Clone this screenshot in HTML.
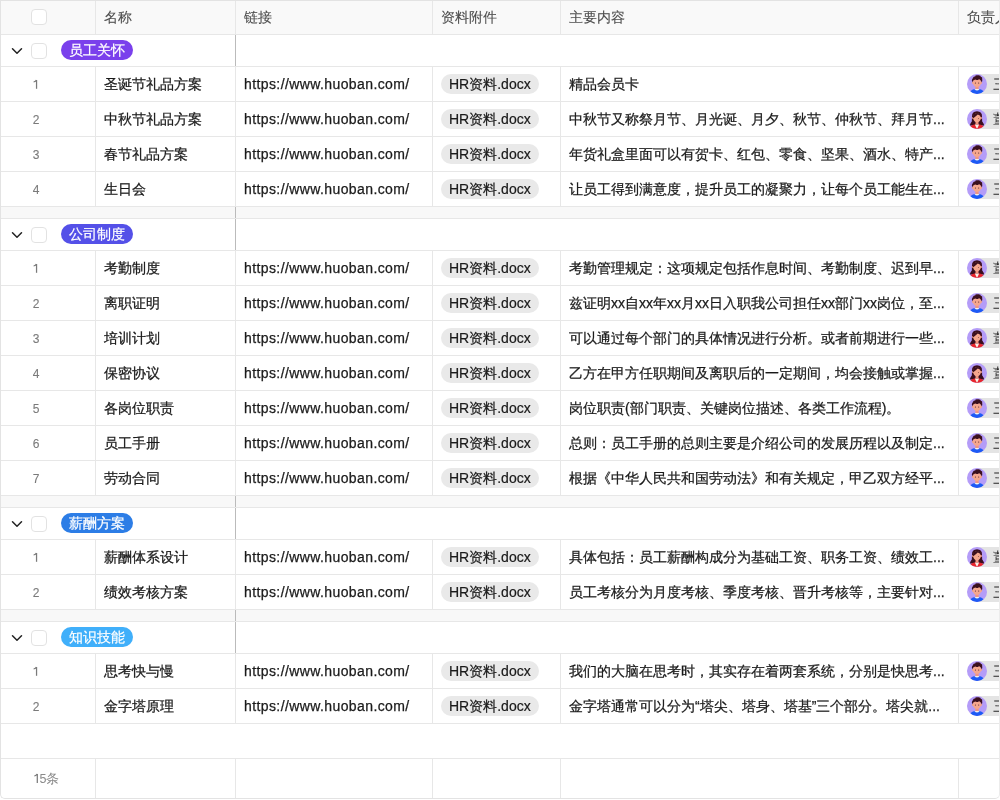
<!DOCTYPE html>
<html><head><meta charset="utf-8"><style>
*{margin:0;padding:0;box-sizing:border-box}
html,body{-webkit-font-smoothing:antialiased;width:1000px;height:800px;overflow:hidden;background:#fff;font-family:"Liberation Sans",sans-serif}
.tbl{position:absolute;left:0;top:0;width:1000px;height:800px;overflow:hidden;will-change:transform}
.edge{position:absolute;left:999px;top:1px;width:1px;height:792px;background:#f4f4f4;z-index:4}
.frame{position:absolute;left:0;top:0;width:1000px;height:799px;border:1px solid #e3e3e3;border-right-color:#ececec;border-radius:0 0 5px 5px;pointer-events:none;z-index:5}
.tbl>div{position:absolute}
.hdr{left:0;width:1000px;background:#f9f9f9}
.hl{left:0;width:1000px;height:1px;background:#e7e7e7}
.vl{width:1px;background:#e7e7e7}
.vld{width:1px;background:#bbbbbb}
.sp{left:0;width:1000px;background:#f8f8f8}
.cb{width:16px;height:16px;border:1px solid #e2e2e2;border-radius:4px;background:#fff}
.ht{height:34px;line-height:35px;font-size:14px;color:#4d4d4d;-webkit-text-stroke:0.1px #4d4d4d;white-space:nowrap}
.tx{height:34px;line-height:34px;font-size:14px;color:#1a1a1a;-webkit-text-stroke:0.25px #1a1a1a;white-space:nowrap}
.url{letter-spacing:0.4px}
.one{width:8px;height:10px}
.one svg{display:block}
.num{left:0;width:72px;text-align:center;height:34px;line-height:35px;font-size:12px;color:#7a7a7a;-webkit-text-stroke:0.1px #7a7a7a}
.chev{left:11px;width:12px;height:12px}
.chev svg{display:block}
.tag{left:61px;height:20px;line-height:20px;padding:0 8px;border-radius:10px;color:#fff;font-size:14px;-webkit-text-stroke:0.2px #fff;white-space:nowrap}
.pill{height:20px;line-height:20px;padding:0 8px;border-radius:10px;background:#e9e9e9;color:#1a1a1a;-webkit-text-stroke:0.2px #1a1a1a;font-size:14px;white-space:nowrap}
.upill{left:977px;width:40px;height:20px;background:#e4e4e4}
.tn{position:absolute;left:16px;top:0;line-height:20px;font-size:14px;color:#262626}
.av{left:967px;width:20px;height:20px}
.av svg{display:block}
.foot{left:0;width:92px;text-align:center;height:39px;line-height:40px;font-size:12.5px;color:#8a8a8a}
</style></head><body>
<div class="tbl"><div class="hdr" style="top:0;height:34px"></div><div class="hl" style="top:34px"></div><div class="vl" style="left:95px;top:0;height:34px"></div><div class="vl" style="left:235px;top:0;height:34px"></div><div class="vl" style="left:432px;top:0;height:34px"></div><div class="vl" style="left:560px;top:0;height:34px"></div><div class="vl" style="left:958px;top:0;height:34px"></div><div class="cb" style="left:31px;top:9px"></div><div class="ht" style="left:104px;top:0px">名称</div><div class="ht" style="left:244px;top:0px">链接</div><div class="ht" style="left:441px;top:0px">资料附件</div><div class="ht" style="left:569px;top:0px">主要内容</div><div class="ht" style="left:967px;top:0px">负责人</div><div class="vld" style="left:235px;top:35px;height:31px"></div><div class="chev" style="top:45px"><svg width="12" height="12" viewBox="0 0 12 12"><path d="M1.5 3.8 L6 8.3 L10.5 3.8" fill="none" stroke="#222" stroke-width="1.5" stroke-linecap="round" stroke-linejoin="round"/></svg></div><div class="cb" style="left:31px;top:43px"></div><div class="tag" style="top:40px;background:#7A40EC">员工关怀</div><div class="hl" style="top:66px"></div><div class="vl" style="left:95px;top:67px;height:34px"></div><div class="vl" style="left:235px;top:67px;height:34px"></div><div class="vl" style="left:432px;top:67px;height:34px"></div><div class="vl" style="left:560px;top:67px;height:34px"></div><div class="vl" style="left:958px;top:67px;height:34px"></div><div class="one" style="left:32px;top:79px"><svg width="8" height="10" viewBox="0 0 8 10"><path d="M4.55 1.0 V9.8" stroke="#7a7a7a" stroke-width="1.25" fill="none"/><path d="M1.6 3.0 Q3.9 2.6 4.4 1.0" stroke="#7a7a7a" stroke-width="1.15" fill="none"/></svg></div><div class="tx" style="left:104px;top:67px">圣诞节礼品方案</div><div class="tx url" style="left:244px;top:67px">https://www.huoban.com/</div><div class="pill" style="left:441px;top:74px">HR资料.docx</div><div class="tx" style="left:569px;top:67px">精品会员卡</div><div class="upill" style="top:74px"><span class="tn">三</span></div><div class="av" style="top:74px"><svg width="20" height="20" viewBox="0 0 20 20"><defs><clipPath id="c0"><circle cx="10" cy="10" r="10"/></clipPath></defs><g clip-path="url(#c0)"><rect width="20" height="20" fill="#B49CF8"/><rect x="8.4" y="10.5" width="3.2" height="5" fill="#F2957E"/><path d="M2.2 20.5 Q3.2 15.6 8 15 L12 15 Q16.8 15.6 17.8 20.5 Z" fill="#1D5AF5"/><path d="M7.4 15 Q10 18.2 12.6 15 Z" fill="#F6F0E8"/><circle cx="5.9" cy="8.8" r="1.1" fill="#F4A48C"/><circle cx="14.1" cy="8.8" r="1.1" fill="#F4A48C"/><ellipse cx="10" cy="8.4" rx="4.1" ry="4.7" fill="#F5A68D"/><path d="M5.3 8.6 Q4.4 5.2 6.2 3.6 Q6.6 2.2 8.2 2.4 Q8.4 0.8 10.2 1.4 Q11 0.6 12 1.6 Q13.4 1.4 13.8 2.8 Q15.8 3.2 15.2 5.2 Q15.6 6.8 14.7 8.6 Q14.4 6.6 13.2 6 Q12.6 5 11.6 5.4 Q10 6.4 8.2 5.6 Q6.8 6.6 6.2 6.4 Q5.6 7.2 5.3 8.6 Z" fill="#3A0F1E"/><circle cx="8.4" cy="9" r="0.5" fill="#3A0F1E"/><circle cx="11.7" cy="9" r="0.5" fill="#3A0F1E"/></g></svg></div><div class="hl" style="top:101px"></div><div class="vl" style="left:95px;top:102px;height:34px"></div><div class="vl" style="left:235px;top:102px;height:34px"></div><div class="vl" style="left:432px;top:102px;height:34px"></div><div class="vl" style="left:560px;top:102px;height:34px"></div><div class="vl" style="left:958px;top:102px;height:34px"></div><div class="num" style="top:103px">2</div><div class="tx" style="left:104px;top:102px">中秋节礼品方案</div><div class="tx url" style="left:244px;top:102px">https://www.huoban.com/</div><div class="pill" style="left:441px;top:109px">HR资料.docx</div><div class="tx" style="left:569px;top:102px">中秋节又称祭月节、月光诞、月夕、秋节、仲秋节、拜月节...</div><div class="upill" style="top:109px"><span class="tn">董</span></div><div class="av" style="top:109px"><svg width="20" height="20" viewBox="0 0 20 20"><defs><clipPath id="c1"><circle cx="10" cy="10" r="10"/></clipPath></defs><g clip-path="url(#c1)"><rect width="20" height="20" fill="#B49CF8"/><path d="M5 8 Q4.6 2.4 10 2.2 Q15.4 2.4 15 8 L15.2 12.6 Q16.6 14 17.2 16.4 L2.8 16.4 Q3.4 14 4.8 12.6 Z" fill="#3A0F1E"/><rect x="8.5" y="10.5" width="3" height="5" fill="#F2957E"/><path d="M2 20.5 Q2.8 16.2 7.6 15.4 L12.4 15.4 Q17.2 16.2 18 20.5 Z" fill="#E8262C"/><path d="M7.8 15.4 L10 20 L12.2 15.4 Z" fill="#F6F0E8"/><circle cx="6" cy="9" r="1" fill="#F4A48C"/><circle cx="14" cy="9" r="1" fill="#F4A48C"/><ellipse cx="10" cy="8.8" rx="3.9" ry="4.5" fill="#F5A68D"/><path d="M5.8 9.4 Q5.4 4.4 10 4 Q14.4 4.2 14.3 8.6 Q13 5.6 10.8 5.4 Q8.4 7.6 5.8 9.4 Z" fill="#3A0F1E"/><circle cx="11.6" cy="9.4" r="0.45" fill="#3A0F1E"/></g></svg></div><div class="hl" style="top:136px"></div><div class="vl" style="left:95px;top:137px;height:34px"></div><div class="vl" style="left:235px;top:137px;height:34px"></div><div class="vl" style="left:432px;top:137px;height:34px"></div><div class="vl" style="left:560px;top:137px;height:34px"></div><div class="vl" style="left:958px;top:137px;height:34px"></div><div class="num" style="top:138px">3</div><div class="tx" style="left:104px;top:137px">春节礼品方案</div><div class="tx url" style="left:244px;top:137px">https://www.huoban.com/</div><div class="pill" style="left:441px;top:144px">HR资料.docx</div><div class="tx" style="left:569px;top:137px">年货礼盒里面可以有贺卡、红包、零食、坚果、酒水、特产...</div><div class="upill" style="top:144px"><span class="tn">三</span></div><div class="av" style="top:144px"><svg width="20" height="20" viewBox="0 0 20 20"><defs><clipPath id="c2"><circle cx="10" cy="10" r="10"/></clipPath></defs><g clip-path="url(#c2)"><rect width="20" height="20" fill="#B49CF8"/><rect x="8.4" y="10.5" width="3.2" height="5" fill="#F2957E"/><path d="M2.2 20.5 Q3.2 15.6 8 15 L12 15 Q16.8 15.6 17.8 20.5 Z" fill="#1D5AF5"/><path d="M7.4 15 Q10 18.2 12.6 15 Z" fill="#F6F0E8"/><circle cx="5.9" cy="8.8" r="1.1" fill="#F4A48C"/><circle cx="14.1" cy="8.8" r="1.1" fill="#F4A48C"/><ellipse cx="10" cy="8.4" rx="4.1" ry="4.7" fill="#F5A68D"/><path d="M5.3 8.6 Q4.4 5.2 6.2 3.6 Q6.6 2.2 8.2 2.4 Q8.4 0.8 10.2 1.4 Q11 0.6 12 1.6 Q13.4 1.4 13.8 2.8 Q15.8 3.2 15.2 5.2 Q15.6 6.8 14.7 8.6 Q14.4 6.6 13.2 6 Q12.6 5 11.6 5.4 Q10 6.4 8.2 5.6 Q6.8 6.6 6.2 6.4 Q5.6 7.2 5.3 8.6 Z" fill="#3A0F1E"/><circle cx="8.4" cy="9" r="0.5" fill="#3A0F1E"/><circle cx="11.7" cy="9" r="0.5" fill="#3A0F1E"/></g></svg></div><div class="hl" style="top:171px"></div><div class="vl" style="left:95px;top:172px;height:34px"></div><div class="vl" style="left:235px;top:172px;height:34px"></div><div class="vl" style="left:432px;top:172px;height:34px"></div><div class="vl" style="left:560px;top:172px;height:34px"></div><div class="vl" style="left:958px;top:172px;height:34px"></div><div class="num" style="top:173px">4</div><div class="tx" style="left:104px;top:172px">生日会</div><div class="tx url" style="left:244px;top:172px">https://www.huoban.com/</div><div class="pill" style="left:441px;top:179px">HR资料.docx</div><div class="tx" style="left:569px;top:172px">让员工得到满意度，提升员工的凝聚力，让每个员工能生在...</div><div class="upill" style="top:179px"><span class="tn">三</span></div><div class="av" style="top:179px"><svg width="20" height="20" viewBox="0 0 20 20"><defs><clipPath id="c3"><circle cx="10" cy="10" r="10"/></clipPath></defs><g clip-path="url(#c3)"><rect width="20" height="20" fill="#B49CF8"/><rect x="8.4" y="10.5" width="3.2" height="5" fill="#F2957E"/><path d="M2.2 20.5 Q3.2 15.6 8 15 L12 15 Q16.8 15.6 17.8 20.5 Z" fill="#1D5AF5"/><path d="M7.4 15 Q10 18.2 12.6 15 Z" fill="#F6F0E8"/><circle cx="5.9" cy="8.8" r="1.1" fill="#F4A48C"/><circle cx="14.1" cy="8.8" r="1.1" fill="#F4A48C"/><ellipse cx="10" cy="8.4" rx="4.1" ry="4.7" fill="#F5A68D"/><path d="M5.3 8.6 Q4.4 5.2 6.2 3.6 Q6.6 2.2 8.2 2.4 Q8.4 0.8 10.2 1.4 Q11 0.6 12 1.6 Q13.4 1.4 13.8 2.8 Q15.8 3.2 15.2 5.2 Q15.6 6.8 14.7 8.6 Q14.4 6.6 13.2 6 Q12.6 5 11.6 5.4 Q10 6.4 8.2 5.6 Q6.8 6.6 6.2 6.4 Q5.6 7.2 5.3 8.6 Z" fill="#3A0F1E"/><circle cx="8.4" cy="9" r="0.5" fill="#3A0F1E"/><circle cx="11.7" cy="9" r="0.5" fill="#3A0F1E"/></g></svg></div><div class="hl" style="top:206px"></div><div class="sp" style="top:207px;height:11px"></div><div class="vld" style="left:235px;top:207px;height:11px"></div><div class="hl" style="top:218px"></div><div class="vld" style="left:235px;top:219px;height:31px"></div><div class="chev" style="top:229px"><svg width="12" height="12" viewBox="0 0 12 12"><path d="M1.5 3.8 L6 8.3 L10.5 3.8" fill="none" stroke="#222" stroke-width="1.5" stroke-linecap="round" stroke-linejoin="round"/></svg></div><div class="cb" style="left:31px;top:227px"></div><div class="tag" style="top:224px;background:#5450E8">公司制度</div><div class="hl" style="top:250px"></div><div class="vl" style="left:95px;top:251px;height:34px"></div><div class="vl" style="left:235px;top:251px;height:34px"></div><div class="vl" style="left:432px;top:251px;height:34px"></div><div class="vl" style="left:560px;top:251px;height:34px"></div><div class="vl" style="left:958px;top:251px;height:34px"></div><div class="one" style="left:32px;top:263px"><svg width="8" height="10" viewBox="0 0 8 10"><path d="M4.55 1.0 V9.8" stroke="#7a7a7a" stroke-width="1.25" fill="none"/><path d="M1.6 3.0 Q3.9 2.6 4.4 1.0" stroke="#7a7a7a" stroke-width="1.15" fill="none"/></svg></div><div class="tx" style="left:104px;top:251px">考勤制度</div><div class="tx url" style="left:244px;top:251px">https://www.huoban.com/</div><div class="pill" style="left:441px;top:258px">HR资料.docx</div><div class="tx" style="left:569px;top:251px">考勤管理规定：这项规定包括作息时间、考勤制度、迟到早...</div><div class="upill" style="top:258px"><span class="tn">董</span></div><div class="av" style="top:258px"><svg width="20" height="20" viewBox="0 0 20 20"><defs><clipPath id="c4"><circle cx="10" cy="10" r="10"/></clipPath></defs><g clip-path="url(#c4)"><rect width="20" height="20" fill="#B49CF8"/><path d="M5 8 Q4.6 2.4 10 2.2 Q15.4 2.4 15 8 L15.2 12.6 Q16.6 14 17.2 16.4 L2.8 16.4 Q3.4 14 4.8 12.6 Z" fill="#3A0F1E"/><rect x="8.5" y="10.5" width="3" height="5" fill="#F2957E"/><path d="M2 20.5 Q2.8 16.2 7.6 15.4 L12.4 15.4 Q17.2 16.2 18 20.5 Z" fill="#E8262C"/><path d="M7.8 15.4 L10 20 L12.2 15.4 Z" fill="#F6F0E8"/><circle cx="6" cy="9" r="1" fill="#F4A48C"/><circle cx="14" cy="9" r="1" fill="#F4A48C"/><ellipse cx="10" cy="8.8" rx="3.9" ry="4.5" fill="#F5A68D"/><path d="M5.8 9.4 Q5.4 4.4 10 4 Q14.4 4.2 14.3 8.6 Q13 5.6 10.8 5.4 Q8.4 7.6 5.8 9.4 Z" fill="#3A0F1E"/><circle cx="11.6" cy="9.4" r="0.45" fill="#3A0F1E"/></g></svg></div><div class="hl" style="top:285px"></div><div class="vl" style="left:95px;top:286px;height:34px"></div><div class="vl" style="left:235px;top:286px;height:34px"></div><div class="vl" style="left:432px;top:286px;height:34px"></div><div class="vl" style="left:560px;top:286px;height:34px"></div><div class="vl" style="left:958px;top:286px;height:34px"></div><div class="num" style="top:287px">2</div><div class="tx" style="left:104px;top:286px">离职证明</div><div class="tx url" style="left:244px;top:286px">https://www.huoban.com/</div><div class="pill" style="left:441px;top:293px">HR资料.docx</div><div class="tx" style="left:569px;top:286px">兹证明xx自xx年xx月xx日入职我公司担任xx部门xx岗位，至...</div><div class="upill" style="top:293px"><span class="tn">三</span></div><div class="av" style="top:293px"><svg width="20" height="20" viewBox="0 0 20 20"><defs><clipPath id="c5"><circle cx="10" cy="10" r="10"/></clipPath></defs><g clip-path="url(#c5)"><rect width="20" height="20" fill="#B49CF8"/><rect x="8.4" y="10.5" width="3.2" height="5" fill="#F2957E"/><path d="M2.2 20.5 Q3.2 15.6 8 15 L12 15 Q16.8 15.6 17.8 20.5 Z" fill="#1D5AF5"/><path d="M7.4 15 Q10 18.2 12.6 15 Z" fill="#F6F0E8"/><circle cx="5.9" cy="8.8" r="1.1" fill="#F4A48C"/><circle cx="14.1" cy="8.8" r="1.1" fill="#F4A48C"/><ellipse cx="10" cy="8.4" rx="4.1" ry="4.7" fill="#F5A68D"/><path d="M5.3 8.6 Q4.4 5.2 6.2 3.6 Q6.6 2.2 8.2 2.4 Q8.4 0.8 10.2 1.4 Q11 0.6 12 1.6 Q13.4 1.4 13.8 2.8 Q15.8 3.2 15.2 5.2 Q15.6 6.8 14.7 8.6 Q14.4 6.6 13.2 6 Q12.6 5 11.6 5.4 Q10 6.4 8.2 5.6 Q6.8 6.6 6.2 6.4 Q5.6 7.2 5.3 8.6 Z" fill="#3A0F1E"/><circle cx="8.4" cy="9" r="0.5" fill="#3A0F1E"/><circle cx="11.7" cy="9" r="0.5" fill="#3A0F1E"/></g></svg></div><div class="hl" style="top:320px"></div><div class="vl" style="left:95px;top:321px;height:34px"></div><div class="vl" style="left:235px;top:321px;height:34px"></div><div class="vl" style="left:432px;top:321px;height:34px"></div><div class="vl" style="left:560px;top:321px;height:34px"></div><div class="vl" style="left:958px;top:321px;height:34px"></div><div class="num" style="top:322px">3</div><div class="tx" style="left:104px;top:321px">培训计划</div><div class="tx url" style="left:244px;top:321px">https://www.huoban.com/</div><div class="pill" style="left:441px;top:328px">HR资料.docx</div><div class="tx" style="left:569px;top:321px">可以通过每个部门的具体情况进行分析。或者前期进行一些...</div><div class="upill" style="top:328px"><span class="tn">董</span></div><div class="av" style="top:328px"><svg width="20" height="20" viewBox="0 0 20 20"><defs><clipPath id="c6"><circle cx="10" cy="10" r="10"/></clipPath></defs><g clip-path="url(#c6)"><rect width="20" height="20" fill="#B49CF8"/><path d="M5 8 Q4.6 2.4 10 2.2 Q15.4 2.4 15 8 L15.2 12.6 Q16.6 14 17.2 16.4 L2.8 16.4 Q3.4 14 4.8 12.6 Z" fill="#3A0F1E"/><rect x="8.5" y="10.5" width="3" height="5" fill="#F2957E"/><path d="M2 20.5 Q2.8 16.2 7.6 15.4 L12.4 15.4 Q17.2 16.2 18 20.5 Z" fill="#E8262C"/><path d="M7.8 15.4 L10 20 L12.2 15.4 Z" fill="#F6F0E8"/><circle cx="6" cy="9" r="1" fill="#F4A48C"/><circle cx="14" cy="9" r="1" fill="#F4A48C"/><ellipse cx="10" cy="8.8" rx="3.9" ry="4.5" fill="#F5A68D"/><path d="M5.8 9.4 Q5.4 4.4 10 4 Q14.4 4.2 14.3 8.6 Q13 5.6 10.8 5.4 Q8.4 7.6 5.8 9.4 Z" fill="#3A0F1E"/><circle cx="11.6" cy="9.4" r="0.45" fill="#3A0F1E"/></g></svg></div><div class="hl" style="top:355px"></div><div class="vl" style="left:95px;top:356px;height:34px"></div><div class="vl" style="left:235px;top:356px;height:34px"></div><div class="vl" style="left:432px;top:356px;height:34px"></div><div class="vl" style="left:560px;top:356px;height:34px"></div><div class="vl" style="left:958px;top:356px;height:34px"></div><div class="num" style="top:357px">4</div><div class="tx" style="left:104px;top:356px">保密协议</div><div class="tx url" style="left:244px;top:356px">https://www.huoban.com/</div><div class="pill" style="left:441px;top:363px">HR资料.docx</div><div class="tx" style="left:569px;top:356px">乙方在甲方任职期间及离职后的一定期间，均会接触或掌握...</div><div class="upill" style="top:363px"><span class="tn">董</span></div><div class="av" style="top:363px"><svg width="20" height="20" viewBox="0 0 20 20"><defs><clipPath id="c7"><circle cx="10" cy="10" r="10"/></clipPath></defs><g clip-path="url(#c7)"><rect width="20" height="20" fill="#B49CF8"/><path d="M5 8 Q4.6 2.4 10 2.2 Q15.4 2.4 15 8 L15.2 12.6 Q16.6 14 17.2 16.4 L2.8 16.4 Q3.4 14 4.8 12.6 Z" fill="#3A0F1E"/><rect x="8.5" y="10.5" width="3" height="5" fill="#F2957E"/><path d="M2 20.5 Q2.8 16.2 7.6 15.4 L12.4 15.4 Q17.2 16.2 18 20.5 Z" fill="#E8262C"/><path d="M7.8 15.4 L10 20 L12.2 15.4 Z" fill="#F6F0E8"/><circle cx="6" cy="9" r="1" fill="#F4A48C"/><circle cx="14" cy="9" r="1" fill="#F4A48C"/><ellipse cx="10" cy="8.8" rx="3.9" ry="4.5" fill="#F5A68D"/><path d="M5.8 9.4 Q5.4 4.4 10 4 Q14.4 4.2 14.3 8.6 Q13 5.6 10.8 5.4 Q8.4 7.6 5.8 9.4 Z" fill="#3A0F1E"/><circle cx="11.6" cy="9.4" r="0.45" fill="#3A0F1E"/></g></svg></div><div class="hl" style="top:390px"></div><div class="vl" style="left:95px;top:391px;height:34px"></div><div class="vl" style="left:235px;top:391px;height:34px"></div><div class="vl" style="left:432px;top:391px;height:34px"></div><div class="vl" style="left:560px;top:391px;height:34px"></div><div class="vl" style="left:958px;top:391px;height:34px"></div><div class="num" style="top:392px">5</div><div class="tx" style="left:104px;top:391px">各岗位职责</div><div class="tx url" style="left:244px;top:391px">https://www.huoban.com/</div><div class="pill" style="left:441px;top:398px">HR资料.docx</div><div class="tx" style="left:569px;top:391px">岗位职责(部门职责、关键岗位描述、各类工作流程)。</div><div class="upill" style="top:398px"><span class="tn">三</span></div><div class="av" style="top:398px"><svg width="20" height="20" viewBox="0 0 20 20"><defs><clipPath id="c8"><circle cx="10" cy="10" r="10"/></clipPath></defs><g clip-path="url(#c8)"><rect width="20" height="20" fill="#B49CF8"/><rect x="8.4" y="10.5" width="3.2" height="5" fill="#F2957E"/><path d="M2.2 20.5 Q3.2 15.6 8 15 L12 15 Q16.8 15.6 17.8 20.5 Z" fill="#1D5AF5"/><path d="M7.4 15 Q10 18.2 12.6 15 Z" fill="#F6F0E8"/><circle cx="5.9" cy="8.8" r="1.1" fill="#F4A48C"/><circle cx="14.1" cy="8.8" r="1.1" fill="#F4A48C"/><ellipse cx="10" cy="8.4" rx="4.1" ry="4.7" fill="#F5A68D"/><path d="M5.3 8.6 Q4.4 5.2 6.2 3.6 Q6.6 2.2 8.2 2.4 Q8.4 0.8 10.2 1.4 Q11 0.6 12 1.6 Q13.4 1.4 13.8 2.8 Q15.8 3.2 15.2 5.2 Q15.6 6.8 14.7 8.6 Q14.4 6.6 13.2 6 Q12.6 5 11.6 5.4 Q10 6.4 8.2 5.6 Q6.8 6.6 6.2 6.4 Q5.6 7.2 5.3 8.6 Z" fill="#3A0F1E"/><circle cx="8.4" cy="9" r="0.5" fill="#3A0F1E"/><circle cx="11.7" cy="9" r="0.5" fill="#3A0F1E"/></g></svg></div><div class="hl" style="top:425px"></div><div class="vl" style="left:95px;top:426px;height:34px"></div><div class="vl" style="left:235px;top:426px;height:34px"></div><div class="vl" style="left:432px;top:426px;height:34px"></div><div class="vl" style="left:560px;top:426px;height:34px"></div><div class="vl" style="left:958px;top:426px;height:34px"></div><div class="num" style="top:427px">6</div><div class="tx" style="left:104px;top:426px">员工手册</div><div class="tx url" style="left:244px;top:426px">https://www.huoban.com/</div><div class="pill" style="left:441px;top:433px">HR资料.docx</div><div class="tx" style="left:569px;top:426px">总则：员工手册的总则主要是介绍公司的发展历程以及制定...</div><div class="upill" style="top:433px"><span class="tn">三</span></div><div class="av" style="top:433px"><svg width="20" height="20" viewBox="0 0 20 20"><defs><clipPath id="c9"><circle cx="10" cy="10" r="10"/></clipPath></defs><g clip-path="url(#c9)"><rect width="20" height="20" fill="#B49CF8"/><rect x="8.4" y="10.5" width="3.2" height="5" fill="#F2957E"/><path d="M2.2 20.5 Q3.2 15.6 8 15 L12 15 Q16.8 15.6 17.8 20.5 Z" fill="#1D5AF5"/><path d="M7.4 15 Q10 18.2 12.6 15 Z" fill="#F6F0E8"/><circle cx="5.9" cy="8.8" r="1.1" fill="#F4A48C"/><circle cx="14.1" cy="8.8" r="1.1" fill="#F4A48C"/><ellipse cx="10" cy="8.4" rx="4.1" ry="4.7" fill="#F5A68D"/><path d="M5.3 8.6 Q4.4 5.2 6.2 3.6 Q6.6 2.2 8.2 2.4 Q8.4 0.8 10.2 1.4 Q11 0.6 12 1.6 Q13.4 1.4 13.8 2.8 Q15.8 3.2 15.2 5.2 Q15.6 6.8 14.7 8.6 Q14.4 6.6 13.2 6 Q12.6 5 11.6 5.4 Q10 6.4 8.2 5.6 Q6.8 6.6 6.2 6.4 Q5.6 7.2 5.3 8.6 Z" fill="#3A0F1E"/><circle cx="8.4" cy="9" r="0.5" fill="#3A0F1E"/><circle cx="11.7" cy="9" r="0.5" fill="#3A0F1E"/></g></svg></div><div class="hl" style="top:460px"></div><div class="vl" style="left:95px;top:461px;height:34px"></div><div class="vl" style="left:235px;top:461px;height:34px"></div><div class="vl" style="left:432px;top:461px;height:34px"></div><div class="vl" style="left:560px;top:461px;height:34px"></div><div class="vl" style="left:958px;top:461px;height:34px"></div><div class="num" style="top:462px">7</div><div class="tx" style="left:104px;top:461px">劳动合同</div><div class="tx url" style="left:244px;top:461px">https://www.huoban.com/</div><div class="pill" style="left:441px;top:468px">HR资料.docx</div><div class="tx" style="left:569px;top:461px">根据《中华人民共和国劳动法》和有关规定，甲乙双方经平...</div><div class="upill" style="top:468px"><span class="tn">三</span></div><div class="av" style="top:468px"><svg width="20" height="20" viewBox="0 0 20 20"><defs><clipPath id="c10"><circle cx="10" cy="10" r="10"/></clipPath></defs><g clip-path="url(#c10)"><rect width="20" height="20" fill="#B49CF8"/><rect x="8.4" y="10.5" width="3.2" height="5" fill="#F2957E"/><path d="M2.2 20.5 Q3.2 15.6 8 15 L12 15 Q16.8 15.6 17.8 20.5 Z" fill="#1D5AF5"/><path d="M7.4 15 Q10 18.2 12.6 15 Z" fill="#F6F0E8"/><circle cx="5.9" cy="8.8" r="1.1" fill="#F4A48C"/><circle cx="14.1" cy="8.8" r="1.1" fill="#F4A48C"/><ellipse cx="10" cy="8.4" rx="4.1" ry="4.7" fill="#F5A68D"/><path d="M5.3 8.6 Q4.4 5.2 6.2 3.6 Q6.6 2.2 8.2 2.4 Q8.4 0.8 10.2 1.4 Q11 0.6 12 1.6 Q13.4 1.4 13.8 2.8 Q15.8 3.2 15.2 5.2 Q15.6 6.8 14.7 8.6 Q14.4 6.6 13.2 6 Q12.6 5 11.6 5.4 Q10 6.4 8.2 5.6 Q6.8 6.6 6.2 6.4 Q5.6 7.2 5.3 8.6 Z" fill="#3A0F1E"/><circle cx="8.4" cy="9" r="0.5" fill="#3A0F1E"/><circle cx="11.7" cy="9" r="0.5" fill="#3A0F1E"/></g></svg></div><div class="hl" style="top:495px"></div><div class="sp" style="top:496px;height:11px"></div><div class="vld" style="left:235px;top:496px;height:11px"></div><div class="hl" style="top:507px"></div><div class="vld" style="left:235px;top:508px;height:31px"></div><div class="chev" style="top:518px"><svg width="12" height="12" viewBox="0 0 12 12"><path d="M1.5 3.8 L6 8.3 L10.5 3.8" fill="none" stroke="#222" stroke-width="1.5" stroke-linecap="round" stroke-linejoin="round"/></svg></div><div class="cb" style="left:31px;top:516px"></div><div class="tag" style="top:513px;background:#2C7DE6">薪酬方案</div><div class="hl" style="top:539px"></div><div class="vl" style="left:95px;top:540px;height:34px"></div><div class="vl" style="left:235px;top:540px;height:34px"></div><div class="vl" style="left:432px;top:540px;height:34px"></div><div class="vl" style="left:560px;top:540px;height:34px"></div><div class="vl" style="left:958px;top:540px;height:34px"></div><div class="one" style="left:32px;top:552px"><svg width="8" height="10" viewBox="0 0 8 10"><path d="M4.55 1.0 V9.8" stroke="#7a7a7a" stroke-width="1.25" fill="none"/><path d="M1.6 3.0 Q3.9 2.6 4.4 1.0" stroke="#7a7a7a" stroke-width="1.15" fill="none"/></svg></div><div class="tx" style="left:104px;top:540px">薪酬体系设计</div><div class="tx url" style="left:244px;top:540px">https://www.huoban.com/</div><div class="pill" style="left:441px;top:547px">HR资料.docx</div><div class="tx" style="left:569px;top:540px">具体包括：员工薪酬构成分为基础工资、职务工资、绩效工...</div><div class="upill" style="top:547px"><span class="tn">董</span></div><div class="av" style="top:547px"><svg width="20" height="20" viewBox="0 0 20 20"><defs><clipPath id="c11"><circle cx="10" cy="10" r="10"/></clipPath></defs><g clip-path="url(#c11)"><rect width="20" height="20" fill="#B49CF8"/><path d="M5 8 Q4.6 2.4 10 2.2 Q15.4 2.4 15 8 L15.2 12.6 Q16.6 14 17.2 16.4 L2.8 16.4 Q3.4 14 4.8 12.6 Z" fill="#3A0F1E"/><rect x="8.5" y="10.5" width="3" height="5" fill="#F2957E"/><path d="M2 20.5 Q2.8 16.2 7.6 15.4 L12.4 15.4 Q17.2 16.2 18 20.5 Z" fill="#E8262C"/><path d="M7.8 15.4 L10 20 L12.2 15.4 Z" fill="#F6F0E8"/><circle cx="6" cy="9" r="1" fill="#F4A48C"/><circle cx="14" cy="9" r="1" fill="#F4A48C"/><ellipse cx="10" cy="8.8" rx="3.9" ry="4.5" fill="#F5A68D"/><path d="M5.8 9.4 Q5.4 4.4 10 4 Q14.4 4.2 14.3 8.6 Q13 5.6 10.8 5.4 Q8.4 7.6 5.8 9.4 Z" fill="#3A0F1E"/><circle cx="11.6" cy="9.4" r="0.45" fill="#3A0F1E"/></g></svg></div><div class="hl" style="top:574px"></div><div class="vl" style="left:95px;top:575px;height:34px"></div><div class="vl" style="left:235px;top:575px;height:34px"></div><div class="vl" style="left:432px;top:575px;height:34px"></div><div class="vl" style="left:560px;top:575px;height:34px"></div><div class="vl" style="left:958px;top:575px;height:34px"></div><div class="num" style="top:576px">2</div><div class="tx" style="left:104px;top:575px">绩效考核方案</div><div class="tx url" style="left:244px;top:575px">https://www.huoban.com/</div><div class="pill" style="left:441px;top:582px">HR资料.docx</div><div class="tx" style="left:569px;top:575px">员工考核分为月度考核、季度考核、晋升考核等，主要针对...</div><div class="upill" style="top:582px"><span class="tn">三</span></div><div class="av" style="top:582px"><svg width="20" height="20" viewBox="0 0 20 20"><defs><clipPath id="c12"><circle cx="10" cy="10" r="10"/></clipPath></defs><g clip-path="url(#c12)"><rect width="20" height="20" fill="#B49CF8"/><rect x="8.4" y="10.5" width="3.2" height="5" fill="#F2957E"/><path d="M2.2 20.5 Q3.2 15.6 8 15 L12 15 Q16.8 15.6 17.8 20.5 Z" fill="#1D5AF5"/><path d="M7.4 15 Q10 18.2 12.6 15 Z" fill="#F6F0E8"/><circle cx="5.9" cy="8.8" r="1.1" fill="#F4A48C"/><circle cx="14.1" cy="8.8" r="1.1" fill="#F4A48C"/><ellipse cx="10" cy="8.4" rx="4.1" ry="4.7" fill="#F5A68D"/><path d="M5.3 8.6 Q4.4 5.2 6.2 3.6 Q6.6 2.2 8.2 2.4 Q8.4 0.8 10.2 1.4 Q11 0.6 12 1.6 Q13.4 1.4 13.8 2.8 Q15.8 3.2 15.2 5.2 Q15.6 6.8 14.7 8.6 Q14.4 6.6 13.2 6 Q12.6 5 11.6 5.4 Q10 6.4 8.2 5.6 Q6.8 6.6 6.2 6.4 Q5.6 7.2 5.3 8.6 Z" fill="#3A0F1E"/><circle cx="8.4" cy="9" r="0.5" fill="#3A0F1E"/><circle cx="11.7" cy="9" r="0.5" fill="#3A0F1E"/></g></svg></div><div class="hl" style="top:609px"></div><div class="sp" style="top:610px;height:11px"></div><div class="vld" style="left:235px;top:610px;height:11px"></div><div class="hl" style="top:621px"></div><div class="vld" style="left:235px;top:622px;height:31px"></div><div class="chev" style="top:632px"><svg width="12" height="12" viewBox="0 0 12 12"><path d="M1.5 3.8 L6 8.3 L10.5 3.8" fill="none" stroke="#222" stroke-width="1.5" stroke-linecap="round" stroke-linejoin="round"/></svg></div><div class="cb" style="left:31px;top:630px"></div><div class="tag" style="top:627px;background:#40AFFA">知识技能</div><div class="hl" style="top:653px"></div><div class="vl" style="left:95px;top:654px;height:34px"></div><div class="vl" style="left:235px;top:654px;height:34px"></div><div class="vl" style="left:432px;top:654px;height:34px"></div><div class="vl" style="left:560px;top:654px;height:34px"></div><div class="vl" style="left:958px;top:654px;height:34px"></div><div class="one" style="left:32px;top:666px"><svg width="8" height="10" viewBox="0 0 8 10"><path d="M4.55 1.0 V9.8" stroke="#7a7a7a" stroke-width="1.25" fill="none"/><path d="M1.6 3.0 Q3.9 2.6 4.4 1.0" stroke="#7a7a7a" stroke-width="1.15" fill="none"/></svg></div><div class="tx" style="left:104px;top:654px">思考快与慢</div><div class="tx url" style="left:244px;top:654px">https://www.huoban.com/</div><div class="pill" style="left:441px;top:661px">HR资料.docx</div><div class="tx" style="left:569px;top:654px">我们的大脑在思考时，其实存在着两套系统，分别是快思考...</div><div class="upill" style="top:661px"><span class="tn">三</span></div><div class="av" style="top:661px"><svg width="20" height="20" viewBox="0 0 20 20"><defs><clipPath id="c13"><circle cx="10" cy="10" r="10"/></clipPath></defs><g clip-path="url(#c13)"><rect width="20" height="20" fill="#B49CF8"/><rect x="8.4" y="10.5" width="3.2" height="5" fill="#F2957E"/><path d="M2.2 20.5 Q3.2 15.6 8 15 L12 15 Q16.8 15.6 17.8 20.5 Z" fill="#1D5AF5"/><path d="M7.4 15 Q10 18.2 12.6 15 Z" fill="#F6F0E8"/><circle cx="5.9" cy="8.8" r="1.1" fill="#F4A48C"/><circle cx="14.1" cy="8.8" r="1.1" fill="#F4A48C"/><ellipse cx="10" cy="8.4" rx="4.1" ry="4.7" fill="#F5A68D"/><path d="M5.3 8.6 Q4.4 5.2 6.2 3.6 Q6.6 2.2 8.2 2.4 Q8.4 0.8 10.2 1.4 Q11 0.6 12 1.6 Q13.4 1.4 13.8 2.8 Q15.8 3.2 15.2 5.2 Q15.6 6.8 14.7 8.6 Q14.4 6.6 13.2 6 Q12.6 5 11.6 5.4 Q10 6.4 8.2 5.6 Q6.8 6.6 6.2 6.4 Q5.6 7.2 5.3 8.6 Z" fill="#3A0F1E"/><circle cx="8.4" cy="9" r="0.5" fill="#3A0F1E"/><circle cx="11.7" cy="9" r="0.5" fill="#3A0F1E"/></g></svg></div><div class="hl" style="top:688px"></div><div class="vl" style="left:95px;top:689px;height:34px"></div><div class="vl" style="left:235px;top:689px;height:34px"></div><div class="vl" style="left:432px;top:689px;height:34px"></div><div class="vl" style="left:560px;top:689px;height:34px"></div><div class="vl" style="left:958px;top:689px;height:34px"></div><div class="num" style="top:690px">2</div><div class="tx" style="left:104px;top:689px">金字塔原理</div><div class="tx url" style="left:244px;top:689px">https://www.huoban.com/</div><div class="pill" style="left:441px;top:696px">HR资料.docx</div><div class="tx" style="left:569px;top:689px">金字塔通常可以分为“塔尖、塔身、塔基”三个部分。塔尖就...</div><div class="upill" style="top:696px"><span class="tn">三</span></div><div class="av" style="top:696px"><svg width="20" height="20" viewBox="0 0 20 20"><defs><clipPath id="c14"><circle cx="10" cy="10" r="10"/></clipPath></defs><g clip-path="url(#c14)"><rect width="20" height="20" fill="#B49CF8"/><rect x="8.4" y="10.5" width="3.2" height="5" fill="#F2957E"/><path d="M2.2 20.5 Q3.2 15.6 8 15 L12 15 Q16.8 15.6 17.8 20.5 Z" fill="#1D5AF5"/><path d="M7.4 15 Q10 18.2 12.6 15 Z" fill="#F6F0E8"/><circle cx="5.9" cy="8.8" r="1.1" fill="#F4A48C"/><circle cx="14.1" cy="8.8" r="1.1" fill="#F4A48C"/><ellipse cx="10" cy="8.4" rx="4.1" ry="4.7" fill="#F5A68D"/><path d="M5.3 8.6 Q4.4 5.2 6.2 3.6 Q6.6 2.2 8.2 2.4 Q8.4 0.8 10.2 1.4 Q11 0.6 12 1.6 Q13.4 1.4 13.8 2.8 Q15.8 3.2 15.2 5.2 Q15.6 6.8 14.7 8.6 Q14.4 6.6 13.2 6 Q12.6 5 11.6 5.4 Q10 6.4 8.2 5.6 Q6.8 6.6 6.2 6.4 Q5.6 7.2 5.3 8.6 Z" fill="#3A0F1E"/><circle cx="8.4" cy="9" r="0.5" fill="#3A0F1E"/><circle cx="11.7" cy="9" r="0.5" fill="#3A0F1E"/></g></svg></div><div class="hl" style="top:723px"></div><div class="hl" style="top:758px"></div><div class="vl" style="left:95px;top:759px;height:40px"></div><div class="vl" style="left:235px;top:759px;height:40px"></div><div class="vl" style="left:432px;top:759px;height:40px"></div><div class="vl" style="left:560px;top:759px;height:40px"></div><div class="vl" style="left:958px;top:759px;height:40px"></div><div class="foot" style="top:759px"><span class="ones"><svg width="7" height="10" viewBox="0 0 7 10" style="display:inline-block;vertical-align:0px"><path d="M4.3 0.9 V10" stroke="#7a7a7a" stroke-width="1.25" fill="none"/><path d="M1.3 3.0 Q3.6 2.6 4.15 0.9" stroke="#7a7a7a" stroke-width="1.15" fill="none"/></svg></span>5条</div><div class="edge"></div><div class="frame"></div></div>
</body></html>
